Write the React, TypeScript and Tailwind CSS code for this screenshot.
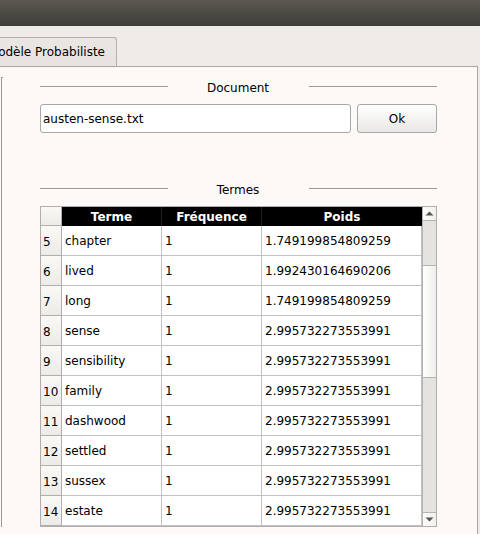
import React from "react";

interface Term {
  index: number;
  term: string;
  frequency: number;
  weight: string;
}

const terms: Term[] = [
  { index: 5, term: "chapter", frequency: 1, weight: "1.749199854809259" },
  { index: 6, term: "lived", frequency: 1, weight: "1.992430164690206" },
  { index: 7, term: "long", frequency: 1, weight: "1.749199854809259" },
  { index: 8, term: "sense", frequency: 1, weight: "2.995732273553991" },
  { index: 9, term: "sensibility", frequency: 1, weight: "2.995732273553991" },
  { index: 10, term: "family", frequency: 1, weight: "2.995732273553991" },
  { index: 11, term: "dashwood", frequency: 1, weight: "2.995732273553991" },
  { index: 12, term: "settled", frequency: 1, weight: "2.995732273553991" },
  { index: 13, term: "sussex", frequency: 1, weight: "2.995732273553991" },
  { index: 14, term: "estate", frequency: 1, weight: "2.995732273553991" },
];

function SectionTitle({ children }: { children: React.ReactNode }) {
  return (
    <div className="flex items-start">
      <span className="mt-[5px] h-px w-32 bg-[#9d9b98]" />
      <span className="flex-1 pr-px text-center">{children}</span>
      <span className="mt-[5px] h-px w-32 bg-[#9d9b98]" />
    </div>
  );
}

function ScrollBar() {
  return (
    <div className="flex w-[14px] shrink-0 flex-col border-l border-[#b6b3b0]">
      <button
        type="button"
        aria-label="Défiler vers le haut"
        className="flex h-[14px] items-center justify-center border-b border-[#b6b3b0] bg-linear-to-r from-[#fdfdfc] to-[#f0efec]"
      >
        <svg width="9" height="5" viewBox="0 0 9 5" aria-hidden="true">
          <path d="M4.5 0.5 8.5 4.5H0.5Z" fill="#555" />
        </svg>
      </button>
      <div className="h-11 bg-[#e4e3e0]" />
      <div className="h-[113px] border-y border-[#b6b3b0] bg-linear-to-r from-white to-[#efeeeb]" />
      <div className="flex-1 bg-[#e4e3e0]" />
      <button
        type="button"
        aria-label="Défiler vers le bas"
        className="flex h-[14px] items-center justify-center border-t border-[#b6b3b0] bg-linear-to-r from-[#fdfdfc] to-[#f0efec]"
      >
        <svg width="9" height="5" viewBox="0 0 9 5" aria-hidden="true">
          <path d="M0.5 0.5H8.5L4.5 4.5Z" fill="#555" />
        </svg>
      </button>
    </div>
  );
}

function TermsTable() {
  return (
    <div className="mt-[9px] flex border border-[#b0adaa] bg-white">
      <table className="flex-1 table-fixed border-separate border-spacing-0 text-left">
        <colgroup>
          <col className="w-[21px]" />
          <col className="w-[100px]" />
          <col className="w-[100px]" />
          <col />
        </colgroup>
        <thead>
          <tr className="h-[19px] bg-black text-center text-white">
            <td className="border-r border-b border-[#b0adaa] bg-linear-to-b from-[#fbf8f5] to-[#edebe7] p-0" />
            <th scope="col" className="border-r border-[#222] p-0">Terme</th>
            <th scope="col" className="border-r border-[#222] p-0">Fréquence</th>
            <th scope="col" className="p-0">Poids</th>
          </tr>
        </thead>
        <tbody>
          {terms.map((row) => (
            <tr key={row.index} className="h-[30px]">
              <th
                scope="row"
                className="border-r border-b border-[#b0adaa] bg-linear-to-b from-[#fbf8f5] to-[#edebe7] p-0 pt-0.5 pl-0.5 font-normal"
              >
                {row.index}
              </th>
              <td className="border-r border-b border-[#c2c2c2] p-0 pl-[3px]">{row.term}</td>
              <td className="border-r border-b border-[#c2c2c2] p-0 pl-[3px]">{row.frequency}</td>
              <td className="border-r border-b border-[#c2c2c2] p-0 pl-[3px]">{row.weight}</td>
            </tr>
          ))}
        </tbody>
      </table>
      <ScrollBar />
    </div>
  );
}

export default function App() {
  return (
    <div className="flex min-h-screen flex-col overflow-hidden bg-[#efece7] font-['DejaVu_Sans',sans-serif] text-[12px] leading-[14px] text-black">
      <header className="h-[26px] bg-linear-to-b from-[#5b5850] to-[#3e3d38]" />
      <nav className="flex pt-[11px]">
        <button
          type="button"
          className="flex h-[29px] w-[117px] items-center justify-end rounded-tr-[3px] border-t border-r border-[#b4b1ae] bg-linear-to-b from-[#e9e6e3] to-[#e6e3e0] pr-[11px] whitespace-nowrap"
        >
          Modèle Probabiliste
        </button>
      </nav>
      <main className="mr-0.5 flex flex-1 items-start border-t border-r border-[#a9a6a3] bg-[#fdf9f6] pt-2.5 pr-10 pb-[7px] pl-px">
        <div className="mr-[37px] w-0.5 self-stretch border-t border-l border-[#9d9b98]" />
        <div className="flex-1 pt-1">
          <SectionTitle>
            <label htmlFor="document">Document</label>
          </SectionTitle>
          <form className="mt-[9px] flex gap-1.5" onSubmit={(event) => event.preventDefault()}>
            <input
              id="document"
              type="text"
              defaultValue="austen-sense.txt"
              className="h-[29px] min-w-0 flex-1 rounded-[3px] border border-[#a9a8a4] bg-white px-0.5 outline-none"
            />
            <button
              type="submit"
              className="h-[29px] w-20 rounded-[3px] border border-[#a9a8a4] bg-linear-to-b from-white to-[#eae8e6]"
            >
              Ok
            </button>
          </form>
          <section className="mt-[50px]">
            <SectionTitle>Termes</SectionTitle>
            <TermsTable />
          </section>
        </div>
      </main>
    </div>
  );
}
